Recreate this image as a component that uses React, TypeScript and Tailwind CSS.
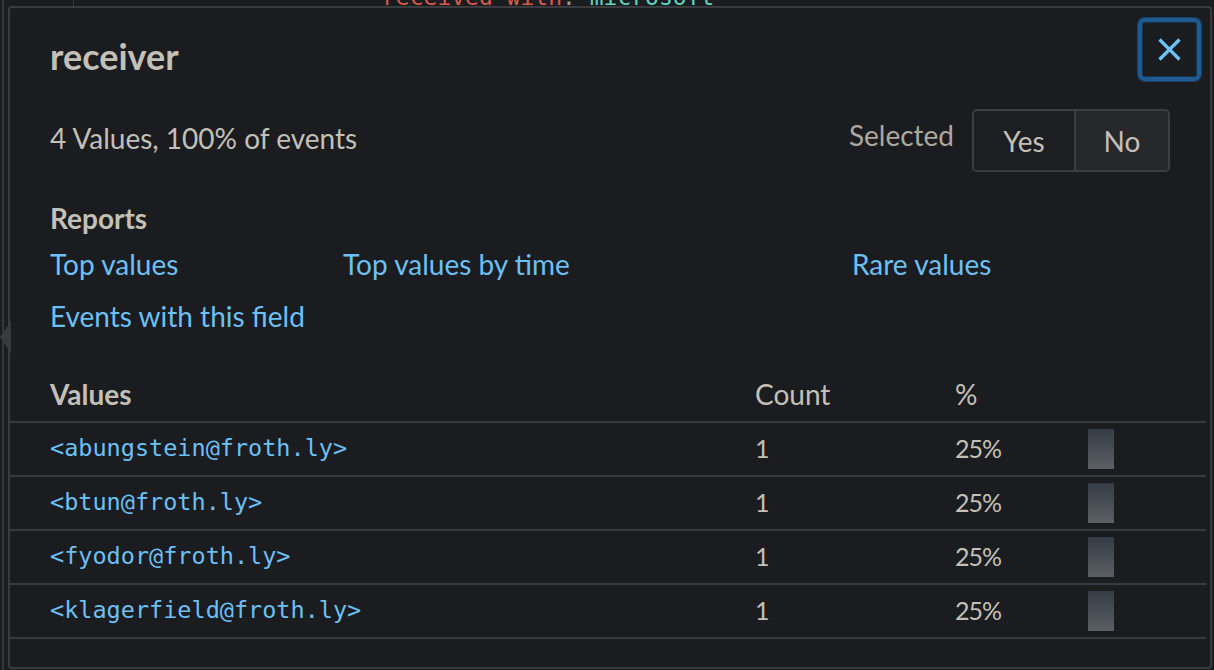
// field summary popover: receiver
const ROWS = [
  { value: "<abungstein@froth.ly>", count: 1, pct: 25 },
  { value: "<btun@froth.ly>", count: 1, pct: 25 },
  { value: "<fyodor@froth.ly>", count: 1, pct: 25 },
  { value: "<klagerfield@froth.ly>", count: 1, pct: 25 },
];

const MONO = "font-['DejaVu_Sans_Mono','Liberation_Mono',monospace]";
const COLS = "grid-cols-[705px_200px_133px_1fr]";

export default function App() {
  return (
    <div className="relative w-[1214px] h-[670px] overflow-hidden bg-[#1b1c1f] font-['Lato','Noto_Sans',sans-serif] text-[28px] text-[#c3c0b9]">
      {/* editor behind the popover */}
      <div className="absolute left-[2px] top-0 bottom-0 w-[2px] bg-[#36373a]" />
      <div className="absolute left-[73px] top-0 h-[8px] w-[1px] bg-[#36373a]" />
      <div className={`absolute left-[382px] top-[-14px] text-[23px] leading-[23px] ${MONO}`}>
        <span className="text-[#d9594c]">received_with</span>
        <span className="text-[#9a9a9a]">: </span>
        <span className="text-[#5fd6c4]">microsoft</span>
      </div>

      {/* popover */}
      <div className="absolute left-[8px] top-[6px] w-[1204px] h-[663px] rounded-[4px] border-2 border-[#3a3b3e] bg-[#1b1c1f]">
        <div className="flex items-start justify-between pl-[40px] pr-[9px] pt-[10px]">
          <h2 className="mt-[20px] text-[36px] font-bold leading-[36px]">receiver</h2>
          <button className="flex h-[63px] w-[63px] items-center justify-center rounded-[7px] border-[4px] border-[#1f5b90] shadow-[0_0_0_1px_#17436b,inset_0_0_0_1px_#123553]">
            <svg width="23" height="23" viewBox="0 0 23 23" className="text-[#6cc3f7]">
              <path d="M1.5 1.5L21.5 21.5M21.5 1.5L1.5 21.5" stroke="currentColor" strokeWidth="3.2" />
            </svg>
          </button>
        </div>

        <div className="mt-[28px] flex h-[63px] items-center justify-between pl-[40px] pr-[40px]">
          <div className="pb-[5px] leading-[34px]">4 Values, 100% of events</div>
          <div className="flex items-center gap-[18px]">
            <span className="pb-[12px] leading-[34px] text-[#aca89f]">Selected</span>
            <div className="flex h-[63px] overflow-hidden rounded-[5px] border-2 border-[#3d3e41]">
              <button className="w-[102px] border-r-2 border-[#3d3e41] bg-[#1d1e21]">Yes</button>
              <button className="w-[92px] bg-[#27282b]">No</button>
            </div>
          </div>
        </div>

        <div className="mt-[29px] pl-[40px]">
          <h3 className="font-bold leading-[34px]">Reports</h3>
          <div className="mt-[12px] grid grid-cols-[293px_509px_1fr] gap-y-[18px] leading-[34px] text-[#6cc0f5]">
            <a>Top values</a>
            <a>Top values by time</a>
            <a>Rare values</a>
            <a>Events with this field</a>
          </div>
        </div>

        <div className="mt-[44px] mr-[4px]">
          <div className={`grid h-[46px] ${COLS} items-start border-b-2 border-[#3a3b3e] pl-[40px] leading-[34px]`}>
            <span className="font-bold">Values</span>
            <span>Count</span>
            <span>%</span>
            <span />
          </div>
          {ROWS.map((r) => (
            <div
              key={r.value}
              className={`grid h-[54px] ${COLS} items-center border-b-2 border-[#3a3b3e] pl-[40px]`}
            >
              <span className={`text-[23.5px] text-[#6cc0f5] ${MONO}`}>{r.value}</span>
              <span className="text-[25px] tracking-[-1px]">{r.count}</span>
              <span className="text-[25px] tracking-[-1px]">{r.pct}%</span>
              <div className="h-[40px] w-[26px] bg-gradient-to-b from-[#353c45] to-[#5b6064]" />
            </div>
          ))}
        </div>
      </div>

      {/* popover pointer */}
      <div className="absolute left-0 top-[321px] h-0 w-0 border-y-[16px] border-r-[11px] border-y-transparent border-r-[#383b3e]" />
    </div>
  );
}
